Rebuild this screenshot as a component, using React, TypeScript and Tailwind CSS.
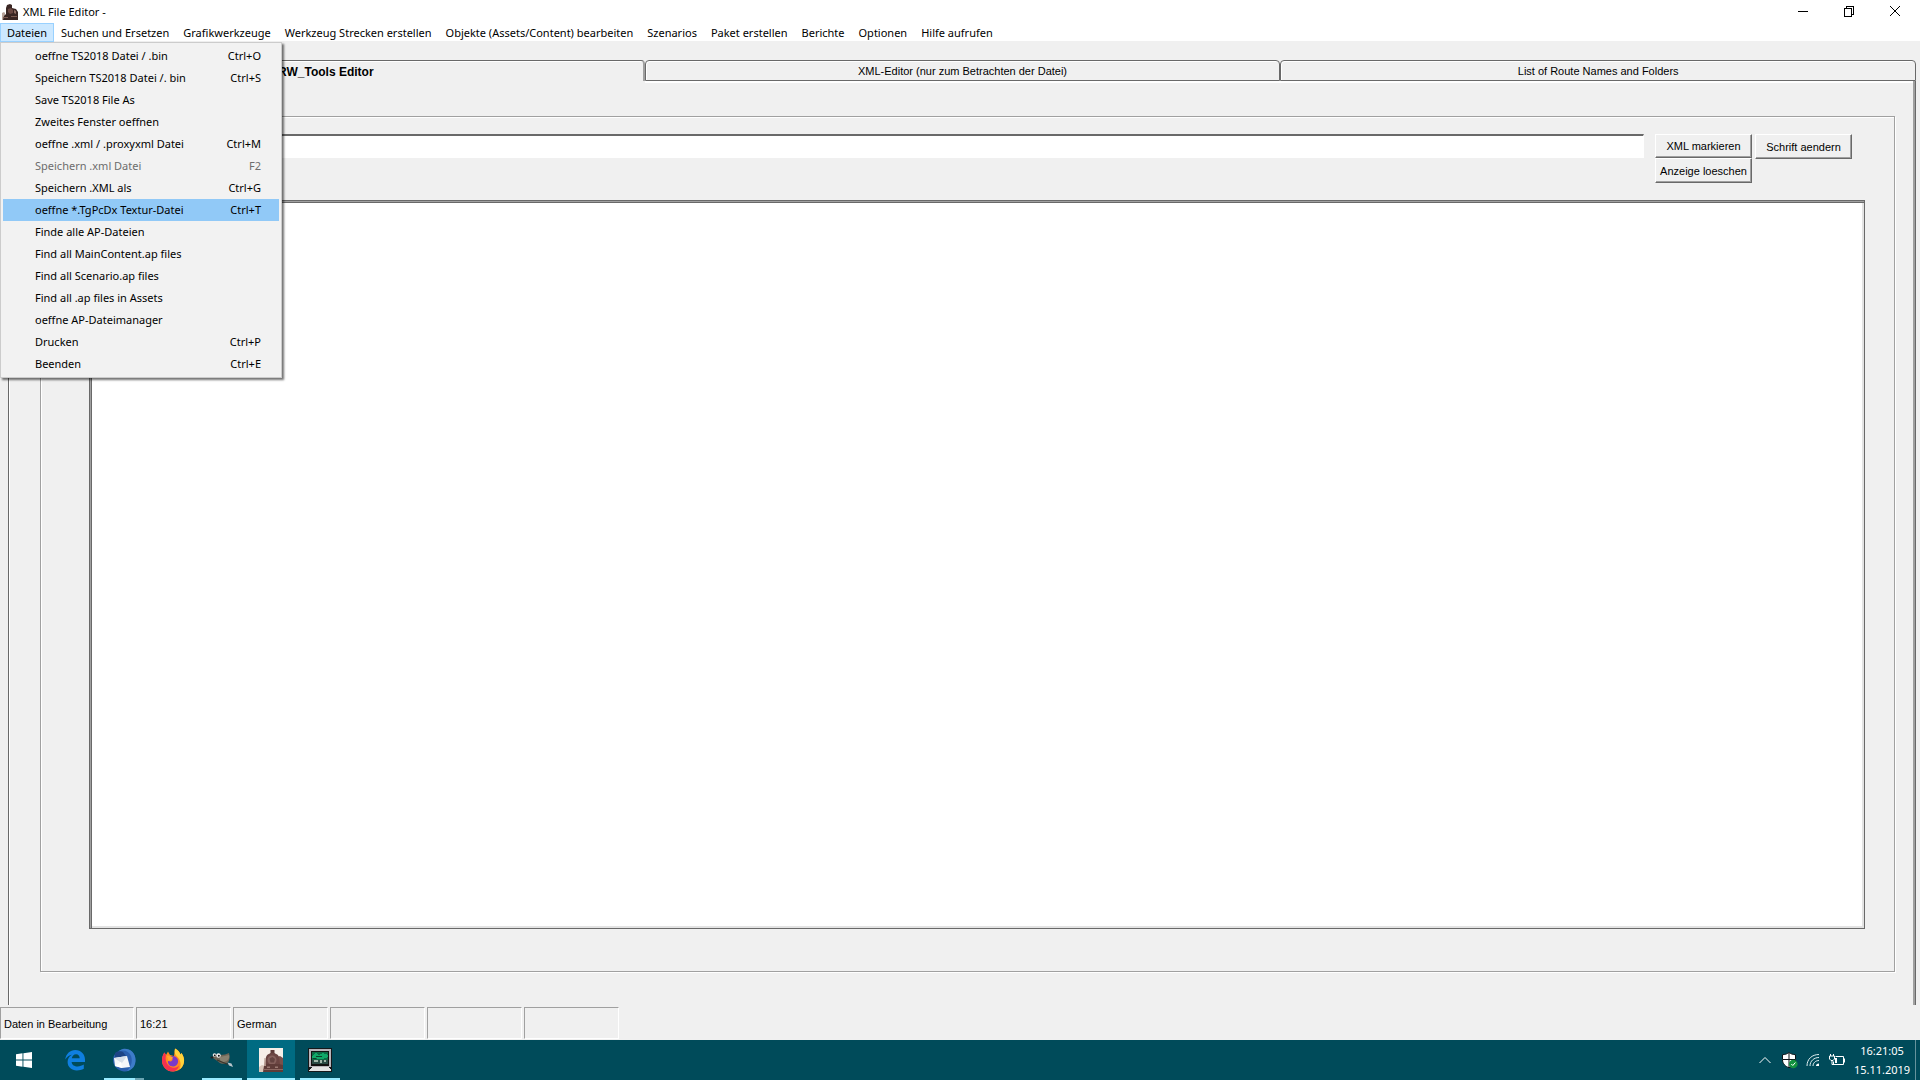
import type { ReactNode } from "react";
import clsx from "clsx";

type MenuEntry = { label: string; keys?: string; disabled?: boolean };

const MENUS = [
  "Suchen und Ersetzen",
  "Grafikwerkzeuge",
  "Werkzeug Strecken erstellen",
  "Objekte (Assets/Content) bearbeiten",
  "Szenarios",
  "Paket erstellen",
  "Berichte",
  "Optionen",
  "Hilfe aufrufen",
];

const FILE_MENU: MenuEntry[] = [
  { label: "oeffne TS2018 Datei / .bin", keys: "Ctrl+O" },
  { label: "Speichern TS2018 Datei /. bin", keys: "Ctrl+S" },
  { label: "Save TS2018 File As" },
  { label: "Zweites Fenster oeffnen" },
  { label: "oeffne .xml / .proxyxml Datei", keys: "Ctrl+M" },
  { label: "Speichern .xml Datei", keys: "F2", disabled: true },
  { label: "Speichern .XML als", keys: "Ctrl+G" },
  { label: "oeffne *.TgPcDx Textur-Datei", keys: "Ctrl+T" },
  { label: "Finde alle AP-Dateien" },
  { label: "Find all MainContent.ap files" },
  { label: "Find all Scenario.ap files" },
  { label: "Find all .ap files in Assets" },
  { label: "oeffne AP-Dateimanager" },
  { label: "Drucken", keys: "Ctrl+P" },
  { label: "Beenden", keys: "Ctrl+E" },
];

const HIGHLIGHTED = 7;

const STATUS = ["16:21", "German", "", "", ""];

function LocomotiveIcon({ className }: { className: string }) {
  return (
    <svg viewBox="0 0 24 24" className={className} aria-hidden="true">
      <rect width="24" height="24" fill="#f6efe8" />
      <path d="M0 19l3-2 3 1v6H0z" fill="#d9c6ba" />
      <path d="M18 9l3-1 3 2v14h-7z" fill="#7a504b" />
      <path d="M11.500 2h4v3l1 1.500h-6l1-1.500z" fill="#5d3b38" />
      <path d="M7 9c1-3 4-4 6.500-4S19 6 20 9l1 8H6z" fill="#6b4542" />
      <circle cx="13" cy="12" r="4.500" fill="#85605b" />
      <path d="M10.500 10.500l3-1.500 2.500 2-1 3.500h-3.500z" fill="#644340" />
      <path d="M5 18l3-2h12l4 1v7H4z" fill="#5f3c38" />
      <path d="M4 21h20v1H4z" fill="#8d6962" />
      <path d="M8 18.500h3v1.500H8zM16 18.500h3v1.500h-3z" fill="#9b7a72" />
      <path d="M5.500 10h1l.5 8H5z" fill="#b3978c" />
    </svg>
  );
}

function TitleIcon() {
  return (
    <svg viewBox="0 0 16 16" className="h-4 w-4" aria-hidden="true">
      <path d="M0 9l2-1 1 1v7H0z" fill="#b9a59b" />
      <path d="M5 1l3-1 2 1v3l4 1 2 3v8H1l1-4 2-2V4z" fill="#3a2623" />
      <path d="M6 5l3-1 2 2v3l-3 1-2-2z" fill="#6b4842" />
      <path d="M1 13h5v1H1zM9 12h6v1H9z" fill="#7d5c52" />
      <path d="M12 6l2 1v3l-2-1z" fill="#8f6d62" />
    </svg>
  );
}

function WindowsLogo() {
  return (
    <svg viewBox="0 0 16 16" className="h-4 w-4" fill="#fff" aria-hidden="true">
      <path d="M0 2.2l6.5-.9v6.2H0zM7.4 1.2L16 0v7.5H7.4zM0 8.4h6.5v6.3L0 13.8zM7.4 8.4H16V16l-8.6-1.2z" />
    </svg>
  );
}

function EdgeLogo() {
  return (
    <svg viewBox="0 0 24 24" className="h-6 w-6" aria-hidden="true">
      <path
        d="M2.2 11.6C3 5.600 7.200 2 12.300 2c6 0 9.700 4.500 9.700 9.700v2.200H8.600c.3 3 2.900 4.500 6 4.500 2.300 0 4.400-.7 6.200-1.800v4.200c-2 1.100-4.500 1.600-7 1.600-5.300 0-9.200-3.200-9.200-8.300 0-3.200 1.600-5.900 4.300-7.400-2.700.4-5 2.100-6.700 4.900zM8.800 10.300h7.900c0-2.200-1.200-4-3.700-4-2.300 0-3.800 1.700-4.200 4z"
        fill="#0f7fe0"
      />
    </svg>
  );
}

function ThunderbirdLogo() {
  return (
    <svg viewBox="0 0 24 24" className="h-6 w-6" aria-hidden="true">
      <path d="M7 3c4-3 10-2.500 13.500 1C24 8 24.500 14 21 19c-2 3-6 5-9 4.500C6 23 1 18 1 12c0-4 2-7 6-9z" fill="#2a5fae" />
      <path d="M6 4c5-3 11-1 13 4 2 6 0 11-4 15 6-1 9-6 8.500-12C23 4 17 0 11 1 9 1.500 7 2.500 6 4z" fill="#3d7cc9" />
      <path d="M3 5c2-2 6-2 8-1l3 4-11 2z" fill="#1d4485" />
      <path d="M2 10l13-2 3 11-8 1-7-2z" fill="#f5f7fa" />
      <path d="M2 10l8 5 5-7z" fill="#d7dfe9" />
      <path d="M3 18l6-4 1 6z" fill="#fff" />
    </svg>
  );
}

function FirefoxLogo() {
  return (
    <svg viewBox="0 0 24 24" className="h-6 w-6" aria-hidden="true">
      <path d="M12 23.500C5.500 23.500 1 18.500 1 12.500 1 9 2 6.500 3.500 4.500L5 7l2-3.500L9 7l4 1 1-7.500c3 1.500 5 4 5.500 6l1-1.500c2 3 3 6 2.500 9-.7 5.500-5 9.500-11 9.500z" fill="#ff8a1e" />
      <path d="M14 .5c3 1.500 5 4 5.500 6l1-1.500c2 3 3 6 2.500 9-.5 3-2 5.500-4.500 7.500C21 16 19 11 16 8.500c-2-2-3-4-2-8z" fill="#ffd33a" />
      <path d="M1 12.500C1 9 2 6.500 3.500 4.500L5 7c-1 4 0 9 4 11.500 3 2 7 1.500 9-1-1 4-4 6-6.500 6C5.500 23.500 1 18.500 1 12.500z" fill="#f5314f" />
      <path d="M8 9c3-2 8-1 9 3 .6 4-2 6.500-5 6.500-3.500 0-5.500-3-5-5.500l3 .5 2-2-3-1z" fill="#7a38c8" />
      <path d="M6 8c2-.6 4 .3 6 1.500-.5 2-2.500 2.500-4.500 3.500z" fill="#ffa42c" />
    </svg>
  );
}

function GimpLogo() {
  return (
    <svg viewBox="0 0 24 24" className="h-6 w-6" aria-hidden="true">
      <path d="M3 8l3-2 4 1 5-.5 4-1.500c1 4 1 8-2 10-3 1.500-7 1-9-1.500L3 10z" fill="#6d6455" />
      <path d="M10 9l9-2c1 3-1 6-5 7-3 0-5-2-4-5z" fill="#87806f" />
      <circle cx="4.500" cy="7" r="1.800" fill="#e8e8e8" />
      <circle cx="8.500" cy="7.500" r="2.200" fill="#f4f4f4" />
      <circle cx="4.800" cy="7.300" r=".9" fill="#111" />
      <circle cx="8.800" cy="7.800" r="1" fill="#111" />
      <ellipse cx="2" cy="9.500" rx="1.500" ry="1" fill="#222" />
      <path d="M7 12l11 4.500" stroke="#3a342b" strokeWidth="1.200" />
      <path d="M17.500 14.500l4 1 1.500 3.500-4-1.500z" fill="#b9c6cc" />
    </svg>
  );
}

function TerminalLogo() {
  return (
    <svg viewBox="0 0 24 24" className="h-6 w-6" aria-hidden="true" shapeRendering="crispEdges">
      <path d="M0 0h24v24H0z" fill="#15181a" />
      <path d="M1 1h22v18H1z" fill="#b9b4b9" />
      <path d="M3 3h18v15H3z" fill="#111" />
      <path d="M4 4h16v12H4z" fill="#0b6b45" />
      <path d="M4 8l4-3 3 2 4-2 5 2v2l-6 2-10-1z" fill="#10a868" />
      <path d="M8 8h6v1H8zM5 10h3v1H5z" fill="#0a3f2a" />
      <path d="M4 12h16v4H4z" fill="#2a4a44" />
      <path d="M6 12h4v2H6zM12 12h2v3h-2zM16 12h2v2h-2z" fill="#9fb5a8" />
      <path d="M4 19h16l3 3v1H1v-1z" fill="#e3e3e3" />
    </svg>
  );
}

type TaskButtonProps = {
  label: string;
  children: ReactNode;
  running?: boolean;
  active?: boolean;
  stacked?: boolean;
};

function TaskButton({ label, children, running, active, stacked }: TaskButtonProps) {
  return (
    <button
      aria-label={label}
      className={clsx("flex h-10 w-12 flex-col items-center", active && "bg-[#006b82]")}
    >
      <span className="flex flex-1 items-center pt-[2px]">{children}</span>
      <span className={clsx("flex h-[2px]", active ? "w-12" : "w-10")}>
        {(running || active) && <span className="flex-1 bg-[#99ebff]" />}
        {stacked && <span className="w-[9px] bg-[#6aa5b3]" />}
      </span>
    </button>
  );
}

function TitleBar() {
  return (
    <header className="flex h-[23px] items-center justify-between bg-white pl-[2px] pr-[19px]">
      <div className="flex items-center gap-[5px]">
        <TitleIcon />
        <h1 className="text-[11px] leading-4">XML File Editor -</h1>
      </div>
      <div className="flex gap-[34px] pb-[2px]">
        <button aria-label="Minimieren">
          <svg viewBox="0 0 12 12" className="h-3 w-3" stroke="#000" shapeRendering="crispEdges">
            <path d="M1 6.500h10" />
          </svg>
        </button>
        <button aria-label="Wiederherstellen">
          <svg viewBox="0 0 12 12" className="h-3 w-3" stroke="#000" fill="none" shapeRendering="crispEdges">
            <path d="M1.500 3.500h7v8h-7zM3.500 3.500v-2h7v8h-2" />
          </svg>
        </button>
        <button aria-label="Schließen">
          <svg viewBox="0 0 12 12" className="h-3 w-3" stroke="#000" fill="none">
            <path d="M1 1l10 10M11 1L1 11" />
          </svg>
        </button>
      </div>
    </header>
  );
}

function FileMenu() {
  return (
    <ul
      role="menu"
      className="absolute left-0 top-full z-10 w-[282px] border border-[#ccc] bg-[#f2f2f2] p-[2px] shadow-[2px_2px_2px_rgba(0,0,0,0.55)]"
    >
      {FILE_MENU.map((entry, i) => (
        <li key={entry.label} role="none">
          <button
            role="menuitem"
            disabled={entry.disabled}
            className={clsx(
              "flex h-[22px] w-full items-center justify-between pl-8 pr-[18px]",
              i === HIGHLIGHTED && "bg-[#91c9f7]",
              entry.disabled && "text-[#6d6d6d]",
            )}
          >
            <span>{entry.label}</span>
            {entry.keys && <span>{entry.keys}</span>}
          </button>
        </li>
      ))}
    </ul>
  );
}

function MenuBar() {
  return (
    <nav className="flex h-[18px] bg-white text-[11px] leading-4">
      <div className="relative h-[19px]">
        <button className="h-[19px] w-[54px] border border-[#99d1ff] bg-[#cce8ff]">Dateien</button>
        <FileMenu />
      </div>
      {MENUS.map((m) => (
        <button key={m} className="h-[19px] px-[7px]">
          {m}
        </button>
      ))}
    </nav>
  );
}

function Tabs() {
  const idle =
    "flex-1 rounded-t-[4px] border border-[#696969] shadow-[inset_1px_1px_0_#fff,0_2px_0_#fff]";
  return (
    <div role="tablist" className="flex h-[21px] text-[11px] leading-4">
      <button
        role="tab"
        aria-selected="true"
        className="flex-1 rounded-t-[4px] border-l border-r-2 border-t border-l-[#696969] border-r-[#a0a0a0] border-t-[#696969] pt-[2px] text-xs font-bold shadow-[inset_1px_1px_0_#fff]"
      >
        RW_Tools Editor
      </button>
      <button role="tab" aria-selected="false" className={idle}>
        XML-Editor (nur zum Betrachten der Datei)
      </button>
      <button role="tab" aria-selected="false" className={idle}>
        List of Route Names and Folders
      </button>
    </div>
  );
}

const RAISED =
  "w-[97px] border border-b-[#696969] border-l-white border-r-[#696969] border-t-white text-[11px] leading-4 shadow-[inset_-1px_-1px_0_#a0a0a0]";

function EditorPage() {
  return (
    <div
      role="tabpanel"
      className="flex flex-1 flex-col border-l border-r border-[#696969] pb-[33px] pl-[31px] pr-5 pt-[35px] shadow-[inset_1px_0_0_#fff,inset_-2px_0_0_#a0a0a0]"
    >
      <div className="flex flex-1 flex-col border border-[#a0a0a0] pb-[42px] pl-12 pr-[29px] pt-[17px] shadow-[1px_1px_0_#fff,inset_1px_1px_0_#fff]">
        <div className="flex gap-[11px] pr-[13px]">
          <input
            aria-label="Dateiname"
            className="h-6 min-w-0 flex-1 border-b border-l-2 border-r border-t-2 border-b-white border-l-[#696969] border-r-white border-t-[#696969] bg-white px-1 text-[11px]"
          />
          <div className="flex items-start gap-[3px]">
            <div className="flex flex-col">
              <button className={clsx(RAISED, "h-6")}>XML markieren</button>
              <button className={clsx(RAISED, "h-[25px]")}>Anzeige loeschen</button>
            </div>
            <button className={clsx(RAISED, "h-[25px]")}>Schrift aendern</button>
          </div>
        </div>
        <textarea
          aria-label="Inhalt"
          className="mt-[17px] block w-full flex-1 resize-none border border-[#696969] bg-white p-1 text-[11px] shadow-[inset_1px_1px_0_#a0a0a0,inset_2px_2px_0_#696969,inset_-2px_-2px_0_#e3e3e3]"
        />
      </div>
    </div>
  );
}

function StatusBar() {
  const cell =
    "flex h-8 items-center border border-b-white border-l-[#a0a0a0] border-r-white border-t-[#a0a0a0] pl-[3px] pt-px";
  return (
    <footer className="mt-[2px] flex gap-[2px] pb-px text-[11px] leading-4">
      <div className={clsx(cell, "w-[134px]")}>Daten in Bearbeitung</div>
      {STATUS.map((s, i) => (
        <div key={i} className={clsx(cell, "w-[95px]")}>
          {s}
        </div>
      ))}
    </footer>
  );
}

function Tray() {
  return (
    <div className="flex items-center text-[11px] text-white">
      <svg viewBox="0 0 12 8" className="mr-[10px] h-2 w-3" fill="none" stroke="#fff" aria-hidden="true">
        <path d="M.5 7L6 1.500 11.500 7" />
      </svg>
      <svg viewBox="0 0 17 17" className="mr-2 h-[17px] w-[17px]" aria-hidden="true">
        <path d="M8 .5c2 1.600 4 2 6.500 2.200v5c0 4-3 6.800-6.500 8-3.500-1.200-6.500-4-6.500-8v-5C4 2.500 6 2.100 8 .5z" fill="#fff" stroke="#0b1418" />
        <path d="M8 1v14M2 7.500h12" stroke="#0b1418" />
        <circle cx="12.300" cy="12" r="4.300" fill="#12913f" />
        <path d="M10.300 12l1.500 1.500 2.600-3" fill="none" stroke="#fff" />
      </svg>
      <svg viewBox="0 0 14 14" className="mr-[9px] h-[14px] w-[14px]" fill="none" stroke="#dfeef0" aria-hidden="true">
        <path d="M1 13C1 6 6 1.500 13 1.500M4 13c0-5 4-8.500 9-8.500M7 13c0-3 2.500-5.500 6-5.500" />
        <path d="M10 13c0-1.500 1-2.500 3-2.500v2.500z" fill="#fff" stroke="none" />
      </svg>
      <svg viewBox="0 0 17 13" className="mr-2 h-[13px] w-[17px]" fill="none" stroke="#fff" aria-hidden="true">
        <path d="M6.500 2.500h8v8h-10v-3M15.500 4.500v4" />
        <path d="M1.500 0v2M4.500 0v2" />
        <path d="M.5 2h5v3l-1.500 1.500h-2L.5 5z" fill="#004b5a" />
        <path d="M3 6.500v4h2" />
        <path d="M6 4h2v5H6z" fill="#fff" stroke="none" />
      </svg>
      <div className="flex w-[56px] flex-col items-center leading-[19px]">
        <time>16:21:05</time>
        <time>15.11.2019</time>
      </div>
      <button aria-label="Desktop anzeigen" className="ml-[5px] h-10 w-[5px] border-l border-[#66939c]" />
    </div>
  );
}

export default function App() {
  return (
    <div className="flex h-screen flex-col overflow-hidden bg-[#f0f0f0] font-['Noto_Sans','Open_Sans',sans-serif] text-black">
      <TitleBar />
      <MenuBar />
      <main className="flex flex-1 flex-col pl-2 pr-1 pt-[19px] font-['Liberation_Sans',Arial,sans-serif]">
        <Tabs />
        <EditorPage />
      </main>
      <div className="font-['Liberation_Sans',Arial,sans-serif]">
        <StatusBar />
      </div>
      <div className="flex h-10 justify-between bg-[#004b5a]">
        <div className="flex gap-px">
          <button aria-label="Start" className="mr-[2px] flex h-10 w-12 items-center justify-center">
            <WindowsLogo />
          </button>
          <TaskButton label="Edge">
            <EdgeLogo />
          </TaskButton>
          <TaskButton label="Thunderbird" running stacked>
            <ThunderbirdLogo />
          </TaskButton>
          <TaskButton label="Firefox">
            <FirefoxLogo />
          </TaskButton>
          <TaskButton label="GIMP" running>
            <GimpLogo />
          </TaskButton>
          <TaskButton label="XML File Editor" active>
            <LocomotiveIcon className="h-6 w-6" />
          </TaskButton>
          <TaskButton label="Monitor" running>
            <TerminalLogo />
          </TaskButton>
        </div>
        <Tray />
      </div>
    </div>
  );
}
